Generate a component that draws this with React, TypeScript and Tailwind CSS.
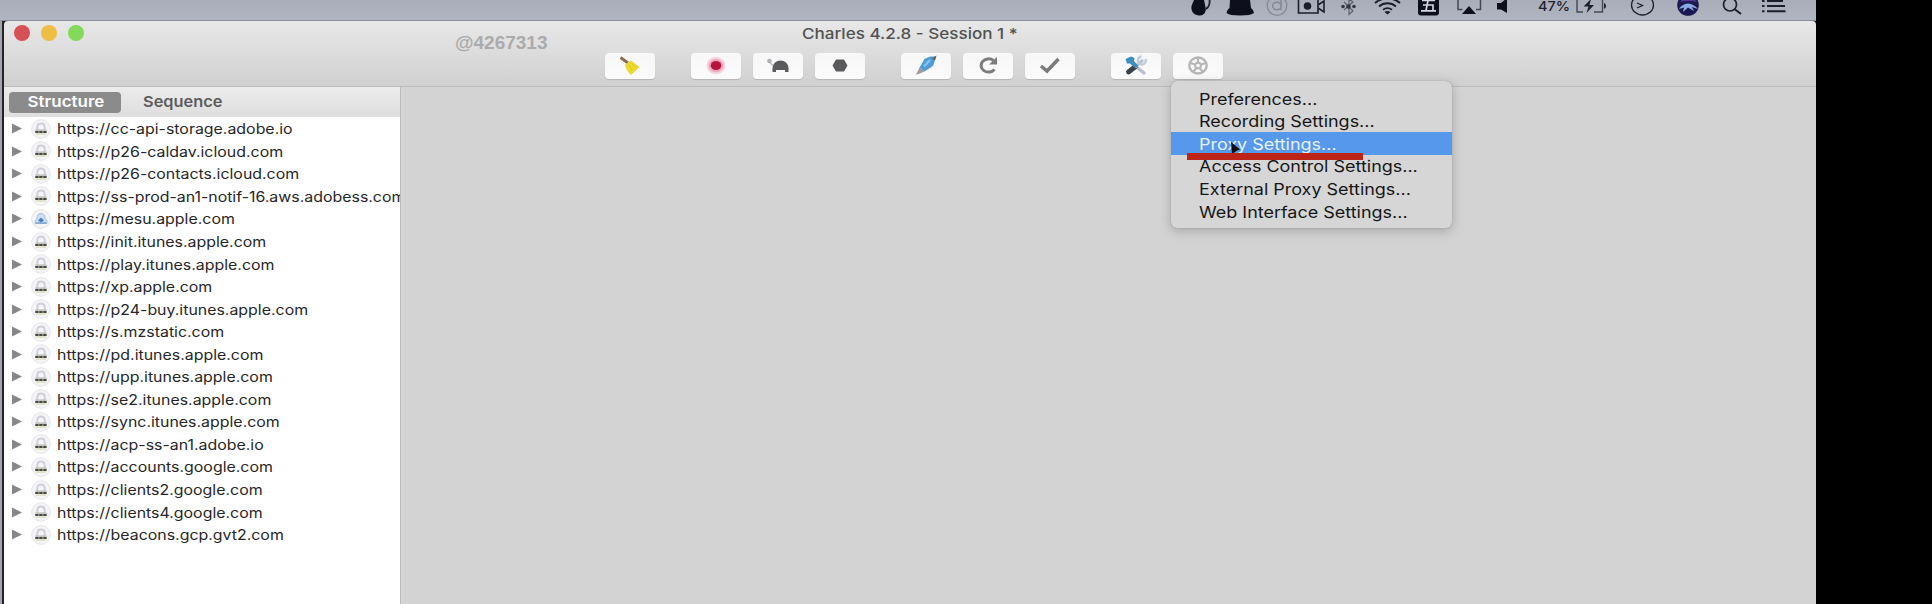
import type { ReactNode } from "react";

type Host = { url: string; cloud?: boolean };

const hosts: Host[] = [
  { url: "https://cc-api-storage.adobe.io" },
  { url: "https://p26-caldav.icloud.com" },
  { url: "https://p26-contacts.icloud.com" },
  { url: "https://ss-prod-an1-notif-16.aws.adobess.com" },
  { url: "https://mesu.apple.com", cloud: true },
  { url: "https://init.itunes.apple.com" },
  { url: "https://play.itunes.apple.com" },
  { url: "https://xp.apple.com" },
  { url: "https://p24-buy.itunes.apple.com" },
  { url: "https://s.mzstatic.com" },
  { url: "https://pd.itunes.apple.com" },
  { url: "https://upp.itunes.apple.com" },
  { url: "https://se2.itunes.apple.com" },
  { url: "https://sync.itunes.apple.com" },
  { url: "https://acp-ss-an1.adobe.io" },
  { url: "https://accounts.google.com" },
  { url: "https://clients2.google.com" },
  { url: "https://clients4.google.com" },
  { url: "https://beacons.gcp.gvt2.com" },
];

const menuItems = [
  "Preferences...",
  "Recording Settings...",
  "Proxy Settings...",
  "Access Control Settings...",
  "External Proxy Settings...",
  "Web Interface Settings...",
];

function MenuBar() {
  return (
    <div className="flex h-[21px] shrink-0 overflow-hidden border-b border-[#8b8e99] bg-linear-to-b from-[#a9adba] to-[#b1b5c2] pl-[1180px]">
      <svg width="636" height="20" viewBox="1180 0 636 20" className="shrink-0" fill="none" stroke="#1c1e2a">
        <path d="M1194 0C1193 3 1191 5 1191.500 9C1192 13.500 1196 15.500 1200 15.500C1205 15 1206.500 11 1205.500 7L1204 0Z" fill="#0d0f1c" stroke="none" />
        <path d="M1206 9C1209 7 1210 4 1209.500 0" strokeWidth="1.800" />
        <path d="M1230 0H1250L1251 8Q1254 10 1254 13Q1251 15.500 1240 15.500Q1229 15.500 1226.500 13Q1226.500 10 1229.500 8Z" fill="#0d0f1c" stroke="none" />
        <circle cx="1277" cy="5.500" r="9.800" stroke="#858995" strokeWidth="1.300" />
        <path d="M1281 -2V10M1281 6A4.200 3.800 0 1 1 1272.600 6A4.200 3.800 0 1 1 1281 6" stroke="#858995" strokeWidth="1.500" />
        <path d="M1298.500 -2V13H1318V-2M1318 5L1324 1V12L1318 8" strokeWidth="1.600" />
        <circle cx="1307.500" cy="6" r="3.800" fill="#1c1e2a" stroke="none" />
        <path d="M1344 2L1353 11L1349 14.500V-1L1353 2L1344 10" stroke="#5c5f6c" strokeWidth="1.200" />
        <g fill="#33353f" stroke="none"><circle cx="1343" cy="6.500" r="1.800" /><circle cx="1348.500" cy="6.500" r="2.200" /><circle cx="1354" cy="6.500" r="1.800" /></g>
        <path d="M1375 3A18 16 0 0 1 1400 3M1379 6.500A12 11 0 0 1 1396 6.500M1383 9.800A7 6 0 0 1 1392 9.800" strokeWidth="1.800" />
        <path d="M1384.500 12L1387.500 14.500L1390.500 12Q1387.500 10 1384.500 12Z" fill="#1c1e2a" stroke="none" />
        <rect x="1418" y="-6" width="21" height="21.500" rx="3" fill="#0d0f1c" stroke="none" />
        <path d="M1422 0.500H1435M1423 5H1433V10.500M1428.500 -2L1426 10.500M1421 10.800H1436" stroke="#d4d7e0" strokeWidth="1.700" />
        <path d="M1462.500 9.500H1458V-2M1476 9.500H1480.500V-2" stroke="#444754" strokeWidth="1.500" />
        <path d="M1469 6L1476 14H1462Z" fill="#0d0f1c" stroke="none" />
        <path d="M1497 3H1501L1507 -2V13L1501 9.500H1497Z" fill="#0d0f1c" stroke="none" />
        <text x="1538" y="10.800" fontFamily="Inter, sans-serif" fontSize="13.500" fontWeight="500" textLength="32" lengthAdjust="spacingAndGlyphs" fill="#20222d" stroke="none">47%</text>
        <path d="M1583 12H1577V-1H1582M1594 12H1602.500V-1H1596" stroke="#444754" strokeWidth="1.400" />
        <path d="M1604 3V9Q1606 8 1606 6Q1606 4 1604 3ZM1591 -1L1583.500 6.500H1588.500L1586.500 13L1594 5H1589.500Z" fill="#1c1e2a" stroke="none" />
        <ellipse cx="1642.500" cy="5" rx="11" ry="10" strokeWidth="1.300" />
        <path d="M1637 3L1642.500 5.500L1637 8" strokeWidth="1.300" />
        <circle cx="1688" cy="5" r="10.800" fill="#1a1a50" stroke="none" />
        <path d="M1680 2Q1684 -3 1688 -3Q1693 -3 1697 2Q1689 0 1680 2Z" fill="#5a3592" stroke="none" />
        <path d="M1679 9Q1682 4 1688 3.500Q1694 4 1698 9L1692 7L1694 11L1688 7.500L1683 12L1684 7.500Z" fill="#8ba9e0" stroke="none" />
        <circle cx="1730" cy="4.500" r="6.500" strokeWidth="1.700" />
        <path d="M1734.500 9L1741 14" strokeWidth="2" />
        <path d="M1762 1H1764.500M1762 6H1764.500M1762 11.300H1764.500M1767 1H1783M1767 6H1785M1767 11.300H1785.500" strokeWidth="2" />
      </svg>
    </div>
  );
}

function ToolButton({ children }: { children: ReactNode }) {
  return (
    <button className="flex h-[26px] w-[50px] items-center justify-center rounded-[4px] bg-linear-to-b from-[#f7f7f7] to-[#fbfbfb] shadow-[0_1px_1px_rgba(0,0,0,0.14)]">
      <svg width="26" height="22" viewBox="0 0 26 22" fill="none">{children}</svg>
    </button>
  );
}

function Toolbar() {
  return (
    <div className="flex gap-9">
      <ToolButton>
        <path d="M3.500 2.500L11 8" stroke="#8a6b50" strokeWidth="2.800" />
        <path d="M8 9.500L14 5.500L22.500 12L14 20Q8.500 15 8 9.500Z" fill="#ecd92f" />
        <path d="M12 10L15 15M14.500 8.500L19 12.500" stroke="#d6c31f" strokeWidth=".8" />
      </ToolButton>
      <div className="flex gap-3">
        <ToolButton>
          <ellipse cx="13" cy="10.500" rx="9.500" ry="8.800" fill="#f8d5de" />
          <ellipse cx="13" cy="10.500" rx="7.500" ry="6.800" fill="#f0a9bd" />
          <ellipse cx="13" cy="10.500" rx="5.300" ry="4.600" fill="#b9143d" />
        </ToolButton>
        <ToolButton>
          <path d="M7.500 13Q8.500 5.500 15.500 5.500Q22.500 5.500 23.500 13V17H20V15H11V17H7.500Z" fill="#5b5b5d" />
          <path d="M4 6.500L8 10.500" stroke="#b9b9bb" strokeWidth="1.500" />
          <circle cx="4.500" cy="6" r="2.300" fill="#aeb2b6" />
        </ToolButton>
        <ToolButton>
          <path d="M9 4.500H17L20.500 10.500L17 16.500H9L5.500 10.500Z" fill="#59595b" />
        </ToolButton>
      </div>
      <div className="flex gap-3">
        <ToolButton>
          <path d="M3 20L6.500 12.500L11.500 16.500Z" fill="#a5989c" />
          <path d="M6.500 12.500L11.500 4L17 1.500L23 1.500L22 5L20 11L11.500 16.500Z" fill="#4f9bd2" />
          <path d="M11 11.500L17 5" stroke="#8bc4e8" strokeWidth="2.200" />
          <path d="M18.500 3.500L23.500 0.500L22 5.500Z" fill="#59636c" />
        </ToolButton>
        <ToolButton>
          <path d="M19.500 14.500A7.500 6.600 0 1 1 18.500 5.500" stroke="#7b7b7b" strokeWidth="3" />
          <path d="M22 2V9.500H14Z" fill="#7b7b7b" />
        </ToolButton>
        <ToolButton>
          <path d="M4 11L10 16L21.500 4" stroke="#7b7b7b" strokeWidth="3.500" />
        </ToolButton>
      </div>
      <div className="flex gap-3">
        <ToolButton>
          <path d="M11 10L21 18" stroke="#b9c2cc" strokeWidth="3.500" strokeLinecap="round" />
          <path d="M12.500 11.500L5.500 17" stroke="#39434a" strokeWidth="4.800" strokeLinecap="round" />
          <path d="M12 12L20 5" stroke="#b9c2cc" strokeWidth="3" />
          <path d="M22.500 4A4 4 0 1 1 18.500 1.500" stroke="#c3ccda" strokeWidth="2.500" />
          <path d="M2.500 4L8 1.500L11.500 3L11 6L15.500 11L12 13L7 8.500L4 8.500Z" fill="#3d8fb9" />
        </ToolButton>
        <ToolButton>
          <ellipse cx="13" cy="10.500" rx="8.700" ry="8" stroke="#b6b6b8" strokeWidth="2.400" />
          <ellipse cx="13" cy="10.500" rx="3" ry="2.700" stroke="#b6b6b8" strokeWidth="2" />
          <path d="M13 8V3M10.500 9.500L5 8M15.500 9.500L21 8M11.500 13L8 17M14.500 13L18 17" stroke="#b6b6b8" strokeWidth="2.200" />
        </ToolButton>
      </div>
    </div>
  );
}

function HostIcon({ cloud }: { cloud?: boolean }) {
  return (
    <svg width="20" height="20" viewBox="0 0 20 20" fill="none" className="mr-[5.500px] ml-[9px] shrink-0">
      <circle cx="10" cy="10" r="9.300" fill="#f5f5f7" stroke="#e4e4e7" />
      {cloud ? (
        <>
          <path d="M4 14.500Q3.500 11 6 9.500Q5.500 5 10 4.500Q14.500 5 14 9.500Q16.500 11 16 14.500Z" fill="#cfdef2" stroke="#a9bfdf" />
          <path d="M10 8.500L13 11.500L10 13.500L7 11.500Z" fill="#4b80bc" />
          <path d="M4.500 14H15.500" stroke="#7fa5d2" strokeWidth="1.500" />
        </>
      ) : (
        <>
          <path d="M6.300 11V8Q6.500 4.500 10 4.500Q13.500 4.500 13.700 8V11" stroke="#cfcfdc" strokeWidth="2" />
          <path d="M4.300 10.300H15.700V14H4.300Z" fill="#c4c4c1" />
          <path d="M4.300 13H15.700" stroke="#4a4a42" strokeWidth="2" strokeDasharray="3.200 .8" />
          <path d="M4.800 15H15.200" stroke="#d2d2a0" />
        </>
      )}
    </svg>
  );
}

function HostRow({ url, cloud }: Host) {
  return (
    <li className="flex h-[22.560px] items-center pl-[8px]">
      <svg width="10" height="11" viewBox="0 0 10 11" className="shrink-0"><path d="M0 .5L10 5.500L0 10.500Z" fill="#888" /></svg>
      <HostIcon cloud={cloud} />
      <span className="origin-left scale-x-[1.136] text-[14px] whitespace-nowrap text-[#262626]">{url}</span>
    </li>
  );
}

function Sidebar() {
  return (
    <aside className="flex w-[397px] shrink-0 flex-col overflow-hidden border-r border-[#bdbdbd] bg-white">
      <div className="flex h-[30px] shrink-0 items-center bg-linear-to-b from-[#ececec] to-[#dedede] pt-px pl-[5px] text-[15px] font-semibold">
        <div className="flex h-[21px] w-[112px] items-center justify-center rounded-[4px] bg-[#8b8b8b] text-white">
          <span className="translate-x-px scale-x-[1.130]">Structure</span>
        </div>
        <div className="ml-[21.500px] text-[#5c5c5c]">
          <span className="inline-block origin-left scale-x-[1.090]">Sequence</span>
        </div>
      </div>
      <ul className="pt-[0.500px]">
        {hosts.map((host) => <HostRow key={host.url} {...host} />)}
      </ul>
    </aside>
  );
}

function SettingsMenu() {
  return (
    <div className="absolute top-[81px] left-[1171px] h-[147px] w-[281px] rounded-[6px] bg-[#d6d6d7] pt-[6px] shadow-[0_0_1px_rgba(0,0,0,0.35),0_3px_12px_rgba(0,0,0,0.22)]">
      {menuItems.map((item) => (
        <div
          key={item}
          className={
            item === "Proxy Settings..."
              ? "flex h-[22.560px] items-center bg-[#5598ec] pt-px pl-[28px] text-[#e9f1fb]"
              : "flex h-[22.560px] items-center pt-px pl-[28px] text-[#161616]"
          }
        >
          <span className="origin-left scale-x-[1.123] text-[16px] whitespace-nowrap">{item}</span>
        </div>
      ))}
      <svg width="10" height="12" viewBox="0 0 10 12" className="absolute top-[61px] left-[60px]"><path d="M0 0L9 7.500L6 8.500L4 10L1 12Z" fill="#0b0b12" /></svg>
      <div className="absolute top-[72px] left-[16px] h-[7px] w-[176px] bg-[#bb2416]" />
    </div>
  );
}

export default function App() {
  return (
    <div className="relative flex h-[604px] w-[1932px] overflow-hidden bg-black font-['Inter','Liberation_Sans',sans-serif]">
      <div className="flex w-[1816px] flex-col bg-[#d3d3d3]">
        <MenuBar />
        <div className="flex grow bg-[#222327]">
          <div className="w-[1.500px] shrink-0 bg-[#a4a5ab]" />
          <div className="ml-[2.500px] flex grow flex-col">
            <header className="h-[66px] shrink-0 rounded-t-[4px] border-b border-[#bcbcbc] bg-linear-to-b from-[#e8e8e8] to-[#d0d0d0]">
              <div className="flex h-[32px] items-start gap-[11px] pt-[4px] pl-[10px]">
                <span className="h-[16px] w-[16px] rounded-full bg-[#d65058]" />
                <span className="h-[16px] w-[16px] rounded-full bg-[#eebd44]" />
                <span className="h-[16px] w-[16px] rounded-full bg-[#84d85a]" />
                <span className="mt-[8px] ml-[360px] w-[93px] font-['Liberation_Sans',sans-serif] text-[19px] leading-[20px] font-bold text-[#ababab]">@4267313</span>
                <span className="-mt-px ml-[243px] origin-left scale-x-[1.138] text-[15px] leading-[20px] font-medium whitespace-nowrap text-[#525252]">Charles 4.2.8 - Session 1 *</span>
              </div>
              <div className="pl-[601px]"><Toolbar /></div>
            </header>
            <div className="flex grow">
              <Sidebar />
              <main className="grow bg-[#d3d3d3]" />
            </div>
          </div>
        </div>
      </div>
      <SettingsMenu />
    </div>
  );
}
